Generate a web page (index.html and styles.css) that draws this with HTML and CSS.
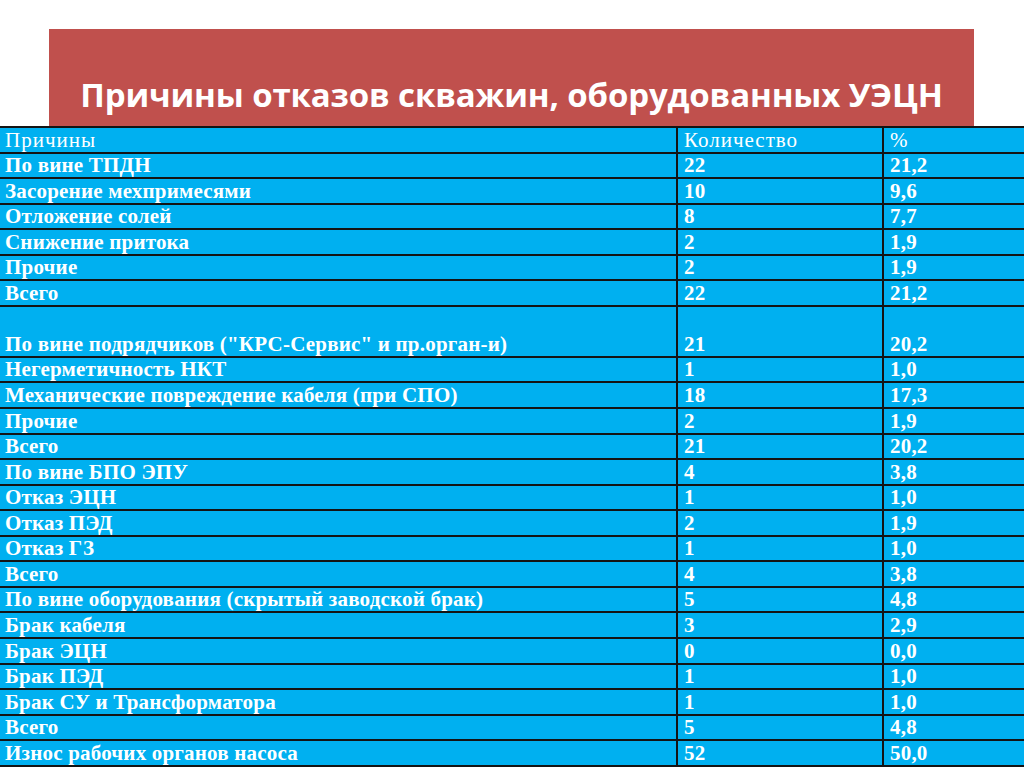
FILE: index.html
```html
<!DOCTYPE html>
<html lang="ru">
<head>
<meta charset="utf-8">
<title>Причины отказов скважин</title>
<link rel="stylesheet" href="styles.css">
</head>
<body>
<div class="slide">
  <div class="banner-wrap">
    <div class="banner"><h1 class="title">Причины отказов скважин, оборудованных УЭЦН</h1></div>
  </div>
  <div class="table">
    <div class="row head"><div class="cell">Причины</div><div class="cell">Количество</div><div class="cell">%</div></div>
    <div class="row"><div class="cell">По вине ТПДН</div><div class="cell">22</div><div class="cell">21,2</div></div>
    <div class="row"><div class="cell">Засорение мехпримесями</div><div class="cell">10</div><div class="cell">9,6</div></div>
    <div class="row"><div class="cell">Отложение солей</div><div class="cell">8</div><div class="cell">7,7</div></div>
    <div class="row"><div class="cell">Снижение притока</div><div class="cell">2</div><div class="cell">1,9</div></div>
    <div class="row"><div class="cell">Прочие</div><div class="cell">2</div><div class="cell">1,9</div></div>
    <div class="row"><div class="cell">Всего</div><div class="cell">22</div><div class="cell">21,2</div></div>
    <div class="row tall"><div class="cell">По вине подрядчиков ("КРС-Сервис" и пр.орган-и)</div><div class="cell">21</div><div class="cell">20,2</div></div>
    <div class="row"><div class="cell">Негерметичность НКТ</div><div class="cell">1</div><div class="cell">1,0</div></div>
    <div class="row"><div class="cell">Механические повреждение кабеля (при СПО)</div><div class="cell">18</div><div class="cell">17,3</div></div>
    <div class="row"><div class="cell">Прочие</div><div class="cell">2</div><div class="cell">1,9</div></div>
    <div class="row"><div class="cell">Всего</div><div class="cell">21</div><div class="cell">20,2</div></div>
    <div class="row"><div class="cell">По вине БПО ЭПУ</div><div class="cell">4</div><div class="cell">3,8</div></div>
    <div class="row"><div class="cell">Отказ ЭЦН</div><div class="cell">1</div><div class="cell">1,0</div></div>
    <div class="row"><div class="cell">Отказ ПЭД</div><div class="cell">2</div><div class="cell">1,9</div></div>
    <div class="row"><div class="cell">Отказ ГЗ</div><div class="cell">1</div><div class="cell">1,0</div></div>
    <div class="row"><div class="cell">Всего</div><div class="cell">4</div><div class="cell">3,8</div></div>
    <div class="row"><div class="cell">По вине оборудования (скрытый заводской брак)</div><div class="cell">5</div><div class="cell">4,8</div></div>
    <div class="row"><div class="cell">Брак кабеля</div><div class="cell">3</div><div class="cell">2,9</div></div>
    <div class="row"><div class="cell">Брак ЭЦН</div><div class="cell">0</div><div class="cell">0,0</div></div>
    <div class="row"><div class="cell">Брак ПЭД</div><div class="cell">1</div><div class="cell">1,0</div></div>
    <div class="row"><div class="cell">Брак СУ и Трансформатора</div><div class="cell">1</div><div class="cell">1,0</div></div>
    <div class="row"><div class="cell">Всего</div><div class="cell">5</div><div class="cell">4,8</div></div>
    <div class="row"><div class="cell">Износ рабочих органов насоса</div><div class="cell">52</div><div class="cell">50,0</div></div>
    <div class="row"><div class="cell"></div><div class="cell"></div><div class="cell"></div></div>
  </div>
</div>
</body>
</html>
```

FILE: styles.css
```css
html, body {
  margin: 0;
  padding: 0;
  background: #ffffff;
}
.slide {
  width: 1024px;
  height: 767px;
  overflow: hidden;
  background: #ffffff;
}
.banner-wrap {
  padding: 29px 50px 0 49px;
}
.banner {
  height: 97px;
  box-sizing: border-box;
  background: #c0504d;
  display: flex;
  align-items: flex-end;
  justify-content: center;
  padding-bottom: 9px;
}
.title {
  margin: 0;
  font-family: "Open Sans", "Noto Sans", sans-serif;
  font-weight: 700;
  font-size: 33px;
  line-height: 45px;
  letter-spacing: -0.15px;
  color: #ffffff;
}
.table {
  border-top: 2px solid #141414;
  background: #00b0f0;
  font-family: "Liberation Serif", "Times New Roman", serif;
  font-weight: 700;
  font-size: 21px;
  letter-spacing: 0.2px;
  color: #ffffff;
}
.row {
  display: grid;
  grid-template-columns: 676px 206px 1fr;
  height: 25.56px;
  box-sizing: border-box;
  border-bottom: 2px solid #141414;
}
.row.tall {
  height: 51.12px;
}
.cell {
  display: flex;
  align-items: flex-end;
  padding: 0 0 1px 5px;
  line-height: 22px;
  white-space: nowrap;
}
.cell + .cell {
  border-left: 2px solid #141414;
  padding-left: 6px;
}
.head .cell {
  font-weight: 400;
  letter-spacing: 1px;
}
```
